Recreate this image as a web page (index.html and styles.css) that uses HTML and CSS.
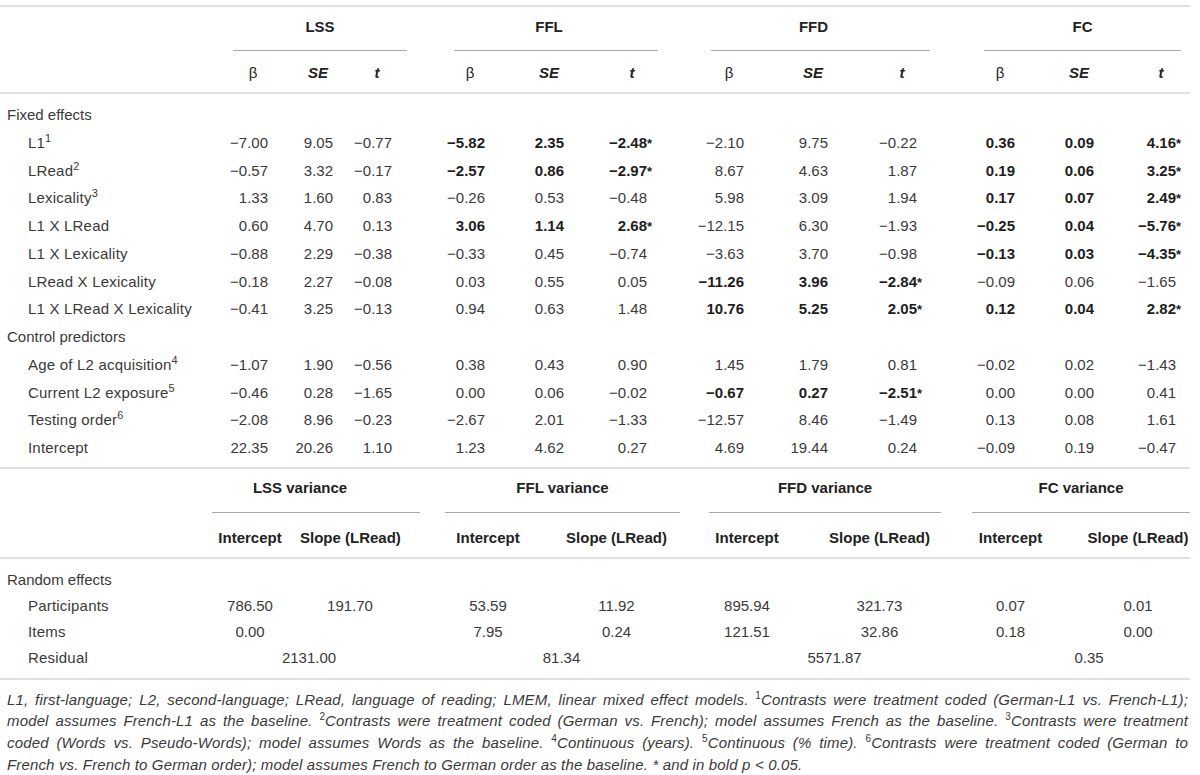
FILE: index.html
```html
<!DOCTYPE html>
<html>
<head>
<meta charset="utf-8">
<link rel="stylesheet" href="styles.css">
</head>
<body>
<div class="page">
  <section class="tbl t1">
    <div class="grp-row g1">
      <div class="grp c2">LSS</div>
      <div class="grp c4">FFL</div>
      <div class="grp c6">FFD</div>
      <div class="grp c8">FC</div>
    </div>
    <div class="r1 sub">
      <div></div>
      <div><span>β</span></div><div><span class="bi">SE</span></div><div><span class="bi">t</span></div>
      <div><span>β</span></div><div><span class="bi">SE</span></div><div><span class="bi">t</span></div>
      <div><span>β</span></div><div><span class="bi">SE</span></div><div><span class="bi">t</span></div>
      <div><span>β</span></div><div><span class="bi">SE</span></div><div><span class="bi">t</span></div>
    </div>
    <div class="body1">
      <div class="r1"><div class="sec">Fixed effects</div></div>
      <div class="r1">
        <div class="lab">L1<sup>1</sup></div>
        <div class="n">−7.00</div><div class="n">9.05</div><div class="n">−0.77</div>
        <div class="n b">−5.82</div><div class="n b">2.35</div><div class="n b">−2.48<span class="ast">*</span></div>
        <div class="n">−2.10</div><div class="n">9.75</div><div class="n">−0.22</div>
        <div class="n b">0.36</div><div class="n b">0.09</div><div class="n b">4.16<span class="ast">*</span></div>
      </div>
      <div class="r1">
        <div class="lab">LRead<sup>2</sup></div>
        <div class="n">−0.57</div><div class="n">3.32</div><div class="n">−0.17</div>
        <div class="n b">−2.57</div><div class="n b">0.86</div><div class="n b">−2.97<span class="ast">*</span></div>
        <div class="n">8.67</div><div class="n">4.63</div><div class="n">1.87</div>
        <div class="n b">0.19</div><div class="n b">0.06</div><div class="n b">3.25<span class="ast">*</span></div>
      </div>
      <div class="r1">
        <div class="lab">Lexicality<sup>3</sup></div>
        <div class="n">1.33</div><div class="n">1.60</div><div class="n">0.83</div>
        <div class="n">−0.26</div><div class="n">0.53</div><div class="n">−0.48</div>
        <div class="n">5.98</div><div class="n">3.09</div><div class="n">1.94</div>
        <div class="n b">0.17</div><div class="n b">0.07</div><div class="n b">2.49<span class="ast">*</span></div>
      </div>
      <div class="r1">
        <div class="lab">L1 X LRead</div>
        <div class="n">0.60</div><div class="n">4.70</div><div class="n">0.13</div>
        <div class="n b">3.06</div><div class="n b">1.14</div><div class="n b">2.68<span class="ast">*</span></div>
        <div class="n">−12.15</div><div class="n">6.30</div><div class="n">−1.93</div>
        <div class="n b">−0.25</div><div class="n b">0.04</div><div class="n b">−5.76<span class="ast">*</span></div>
      </div>
      <div class="r1">
        <div class="lab">L1 X Lexicality</div>
        <div class="n">−0.88</div><div class="n">2.29</div><div class="n">−0.38</div>
        <div class="n">−0.33</div><div class="n">0.45</div><div class="n">−0.74</div>
        <div class="n">−3.63</div><div class="n">3.70</div><div class="n">−0.98</div>
        <div class="n b">−0.13</div><div class="n b">0.03</div><div class="n b">−4.35<span class="ast">*</span></div>
      </div>
      <div class="r1">
        <div class="lab">LRead X Lexicality</div>
        <div class="n">−0.18</div><div class="n">2.27</div><div class="n">−0.08</div>
        <div class="n">0.03</div><div class="n">0.55</div><div class="n">0.05</div>
        <div class="n b">−11.26</div><div class="n b">3.96</div><div class="n b">−2.84<span class="ast">*</span></div>
        <div class="n">−0.09</div><div class="n">0.06</div><div class="n">−1.65</div>
      </div>
      <div class="r1">
        <div class="lab">L1 X LRead X Lexicality</div>
        <div class="n">−0.41</div><div class="n">3.25</div><div class="n">−0.13</div>
        <div class="n">0.94</div><div class="n">0.63</div><div class="n">1.48</div>
        <div class="n b">10.76</div><div class="n b">5.25</div><div class="n b">2.05<span class="ast">*</span></div>
        <div class="n b">0.12</div><div class="n b">0.04</div><div class="n b">2.82<span class="ast">*</span></div>
      </div>
      <div class="r1"><div class="sec">Control predictors</div></div>
      <div class="r1">
        <div class="lab">Age of L2 acquisition<sup>4</sup></div>
        <div class="n">−1.07</div><div class="n">1.90</div><div class="n">−0.56</div>
        <div class="n">0.38</div><div class="n">0.43</div><div class="n">0.90</div>
        <div class="n">1.45</div><div class="n">1.79</div><div class="n">0.81</div>
        <div class="n">−0.02</div><div class="n">0.02</div><div class="n">−1.43</div>
      </div>
      <div class="r1">
        <div class="lab">Current L2 exposure<sup>5</sup></div>
        <div class="n">−0.46</div><div class="n">0.28</div><div class="n">−1.65</div>
        <div class="n">0.00</div><div class="n">0.06</div><div class="n">−0.02</div>
        <div class="n b">−0.67</div><div class="n b">0.27</div><div class="n b">−2.51<span class="ast">*</span></div>
        <div class="n">0.00</div><div class="n">0.00</div><div class="n">0.41</div>
      </div>
      <div class="r1">
        <div class="lab">Testing order<sup>6</sup></div>
        <div class="n">−2.08</div><div class="n">8.96</div><div class="n">−0.23</div>
        <div class="n">−2.67</div><div class="n">2.01</div><div class="n">−1.33</div>
        <div class="n">−12.57</div><div class="n">8.46</div><div class="n">−1.49</div>
        <div class="n">0.13</div><div class="n">0.08</div><div class="n">1.61</div>
      </div>
      <div class="r1">
        <div class="lab">Intercept</div>
        <div class="n">22.35</div><div class="n">20.26</div><div class="n">1.10</div>
        <div class="n">1.23</div><div class="n">4.62</div><div class="n">0.27</div>
        <div class="n">4.69</div><div class="n">19.44</div><div class="n">0.24</div>
        <div class="n">−0.09</div><div class="n">0.19</div><div class="n">−0.47</div>
      </div>
    </div>
  </section>

  <section class="tbl t2">
    <div class="grp-row g2">
      <div class="grp c2 lss">LSS variance</div>
      <div class="grp c4">FFL variance</div>
      <div class="grp c6">FFD variance</div>
      <div class="grp c8">FC variance</div>
    </div>
    <div class="r2 sub2">
      <div></div>
      <div>Intercept</div><div>Slope (LRead)</div>
      <div class="k3">Intercept</div><div>Slope (LRead)</div>
      <div>Intercept</div><div>Slope (LRead)</div>
      <div>Intercept</div><div class="k8">Slope (LRead)</div>
    </div>
    <div class="body2">
      <div class="r2"><div class="sec">Random effects</div></div>
      <div class="r2">
        <div class="lab">Participants</div>
        <div class="v">786.50</div><div class="v">191.70</div>
        <div class="v k3">53.59</div><div class="v">11.92</div>
        <div class="v">895.94</div><div class="v">321.73</div>
        <div class="v">0.07</div><div class="v k8">0.01</div>
      </div>
      <div class="r2">
        <div class="lab">Items</div>
        <div class="v">0.00</div><div class="v"></div>
        <div class="v k3">7.95</div><div class="v">0.24</div>
        <div class="v">121.51</div><div class="v">32.86</div>
        <div class="v">0.18</div><div class="v k8">0.00</div>
      </div>
      <div class="r2">
        <div class="lab">Residual</div>
        <div class="v span first">2131.00</div>
        <div class="v span">81.34</div>
        <div class="v span">5571.87</div>
        <div class="v span">0.35</div>
      </div>
    </div>
  </section>

  <div class="note">
    <span class="ln">L1, first-language; L2, second-language; LRead, language of reading; LMEM, linear mixed effect models. <sup>1</sup>Contrasts were treatment coded (German-L1 vs. French-L1);</span>
    <span class="ln">model assumes French-L1 as the baseline. <sup>2</sup>Contrasts were treatment coded (German vs. French); model assumes French as the baseline. <sup>3</sup>Contrasts were treatment</span>
    <span class="ln">coded (Words vs. Pseudo-Words); model assumes Words as the baseline. <sup>4</sup>Continuous (years). <sup>5</sup>Continuous (% time). <sup>6</sup>Contrasts were treatment coded (German to</span>
    <span class="ln last">French vs. French to German order); model assumes French to German order as the baseline. * and in bold p &lt; 0.05.</span>
  </div>
</div>
</body>
</html>
```

FILE: styles.css
```css
html, body {
  margin: 0;
  padding: 0;
  background: #ffffff;
}

body {
  font-family: "Liberation Sans", Arial, Helvetica, sans-serif;
  font-size: 15px;
  color: #3a3a3a;
}

.page {
  width: 1190px;
  padding-top: 5px;
}

.tbl {
  border-top: 2px solid #e0e0e0;
}

/* group header rows */
.grp-row {
  display: grid;
}

.g1 {
  grid-template-columns: 233px 174px 47px 204px 53px 219px 54px 197px 9px;
}

.g2 {
  grid-template-columns: 212px 208px 25px 235px 29px 232px 31px 218px;
}

.c2 { grid-column: 2; }
.c4 { grid-column: 4; }
.c6 { grid-column: 6; }
.c8 { grid-column: 8; }

.grp {
  font-weight: bold;
  color: #222;
  text-align: center;
  line-height: 20px;
  border-bottom: 1px solid #a8a8a8;
  white-space: nowrap;
}

.g1 .grp {
  padding: 10px 0 13px;
}

.g1 .c4,
.g1 .c6 {
  padding-right: 14px;
}

.g2 .grp {
  padding: 9px 0 14px;
}

.g2 .lss {
  padding-right: 32px;
}

/* table 1 data grid */
.r1 {
  display: grid;
  grid-template-columns: 200px 68px 65px 59px 93px 79px 83px 97px 84px 89px 98px 79px 82px 14px;
}

.body1 .r1 > div {
  height: 27.75px;
  line-height: 27.75px;
  white-space: nowrap;
}

.r1.sub {
  border-bottom: 2px solid #e0e0e0;
}

.r1.sub > div {
  text-align: right;
  height: 20px;
  padding: 12px 0 9px;
  line-height: 20px;
  white-space: nowrap;
  color: #222;
}

.sub span {
  display: inline-block;
  width: 30px;
  text-align: center;
}

.bi {
  font-weight: bold;
  font-style: italic;
}

.body1 {
  padding: 7px 0 5px;
}

.sec {
  grid-column: 1 / -1;
  padding-left: 7px;
}

.lab {
  padding-left: 28px;
  letter-spacing: 0.2px;
}

.n {
  text-align: right;
}

.b {
  font-weight: bold;
  color: #1e1e1e;
}

.ast {
  display: inline-block;
  width: 0;
  font-size: 13px;
}

sup {
  font-size: 11px;
  line-height: 0;
  vertical-align: 6px;
}

/* table 2 */
.r2 {
  display: grid;
  grid-template-columns: 200px 100px 100px 152px 129px 132px 133px 129px 115px;
}

.r2.sub2 {
  border-bottom: 2px solid #e0e0e0;
}

.r2.sub2 > div {
  text-align: center;
  font-weight: bold;
  color: #222;
  height: 20px;
  padding-top: 15px;
  padding-bottom: 9px;
  line-height: 20px;
  white-space: nowrap;
}

.body2 {
  padding: 8px 0 7px;
  border-bottom: 2px solid #e0e0e0;
}

.body2 .r2 > div {
  height: 26px;
  line-height: 26px;
  white-space: nowrap;
}

.v {
  text-align: center;
}

.r2 > .k3 {
  padding-left: 24px;
}

.r2 > .k8 {
  padding-left: 11px;
}

.span {
  grid-column: span 2;
  padding-left: 42px;
}

.span.first {
  padding-left: 18px;
}

/* footnote */
.note {
  width: 1181px;
  padding: 9px 0 0 7px;
  font-style: italic;
  font-size: 15px;
  line-height: 21.7px;
  letter-spacing: 0.15px;
  color: #3a3a3a;
}

.ln {
  display: block;
  text-align: justify;
  text-align-last: justify;
}

.ln.last {
  text-align-last: auto;
}

.note sup {
  font-style: normal;
  font-size: 10px;
  vertical-align: 6px;
}
```
